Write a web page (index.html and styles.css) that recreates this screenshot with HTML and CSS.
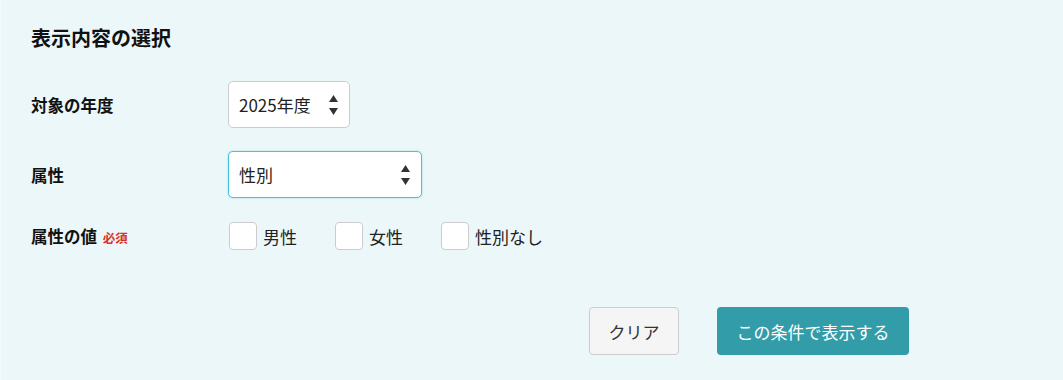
FILE: index.html
```html
<!DOCTYPE html>
<html lang="ja">
<head>
  <meta charset="UTF-8">
  <meta name="viewport" content="width=device-width, initial-scale=1.0">
  <title>表示内容の選択</title>
  <link rel="stylesheet" href="styles.css">
</head>
<body>
  <div class="panel">
    <h2 class="panel-title">表示内容の選択</h2>
    <div class="form">
      <div class="row">
        <div class="label">対象の年度</div>
        <div class="select select-year">
          <span>2025年度</span>
          <svg class="arrows" width="9" height="20" viewBox="0 0 9 20"><path d="M4.5 0 L9 7 L0 7 Z M0 13 L9 13 L4.5 20 Z" fill="#333"/></svg>
        </div>
      </div>
      <div class="row">
        <div class="label">属性</div>
        <div class="select select-attr is-focus">
          <span>性別</span>
          <svg class="arrows" width="9" height="20" viewBox="0 0 9 20"><path d="M4.5 0 L9 7 L0 7 Z M0 13 L9 13 L4.5 20 Z" fill="#333"/></svg>
        </div>
      </div>
      <div class="row row-check">
        <div class="label">属性の値 <span class="required">必須</span></div>
        <div class="checks">
          <label class="check"><span class="box"></span>男性</label>
          <label class="check"><span class="box"></span>女性</label>
          <label class="check"><span class="box"></span>性別なし</label>
        </div>
      </div>
    </div>
    <div class="actions">
      <button class="btn btn-clear">クリア</button>
      <button class="btn btn-submit">この条件で表示する</button>
    </div>
  </div>
</body>
</html>
```

FILE: styles.css
```css
html, body { margin: 0; padding: 0; }
body {
  background: #ebf7f9;
  color: #222;
  font-family: "Noto Sans CJK JP", "Noto Sans", sans-serif;
  font-size: 17px;
}
.panel {
  padding: 23px 31px 0 30px;
  height: 380px;
  box-sizing: border-box;
  border-left: 1px solid #f2fafb;
}
.panel-title {
  margin: 0;
  font-size: 20px;
  line-height: 30px;
  font-weight: 700;
  color: #111;
}
.form {
  margin-top: 28px;
  display: flex;
  flex-direction: column;
  gap: 23px;
}
.row {
  display: flex;
  align-items: center;
}
.label {
  width: 197px;
  flex: none;
  font-weight: 700;
  font-size: 16.5px;
  color: #111;
}
.required {
  color: #d9321e;
  font-size: 12.5px;
  margin-left: 2px;
}
.select {
  box-sizing: border-box;
  height: 47px;
  display: flex;
  align-items: center;
  justify-content: space-between;
  padding: 0 11px 0 10px;
  background: #fff;
  border: 1px solid #ccc;
  border-radius: 5px;
  font-size: 17px;
  color: #222;
}
.select-year { width: 122px; }
.select-attr { width: 194px; }
.is-focus {
  border-color: #45c2dd;
  box-shadow: 0 0 2px rgba(69, 194, 221, 0.5);
}
.arrows { display: block; }
.row-check { height: 30px; }
.checks {
  display: flex;
  align-items: center;
  gap: 38px;
  margin-left: 1px;
}
.check {
  display: flex;
  align-items: center;
  gap: 6px;
  font-size: 17px;
  color: #222;
}
.box {
  box-sizing: border-box;
  width: 28px;
  height: 28px;
  background: #fff;
  border: 1px solid #ccc;
  border-radius: 4px;
}
.actions {
  display: flex;
  justify-content: flex-end;
  gap: 38px;
  margin-top: 56px;
  padding-right: 123px;
}
.btn {
  box-sizing: border-box;
  height: 48px;
  border-radius: 4px;
  font-family: inherit;
  font-size: 17px;
  cursor: pointer;
}
.btn-clear {
  width: 90px;
  background: #f5f5f5;
  border: 1px solid #ccc;
  color: #333;
}
.btn-submit {
  width: 192px;
  background: #329da9;
  border: none;
  color: #fff;
}
```
